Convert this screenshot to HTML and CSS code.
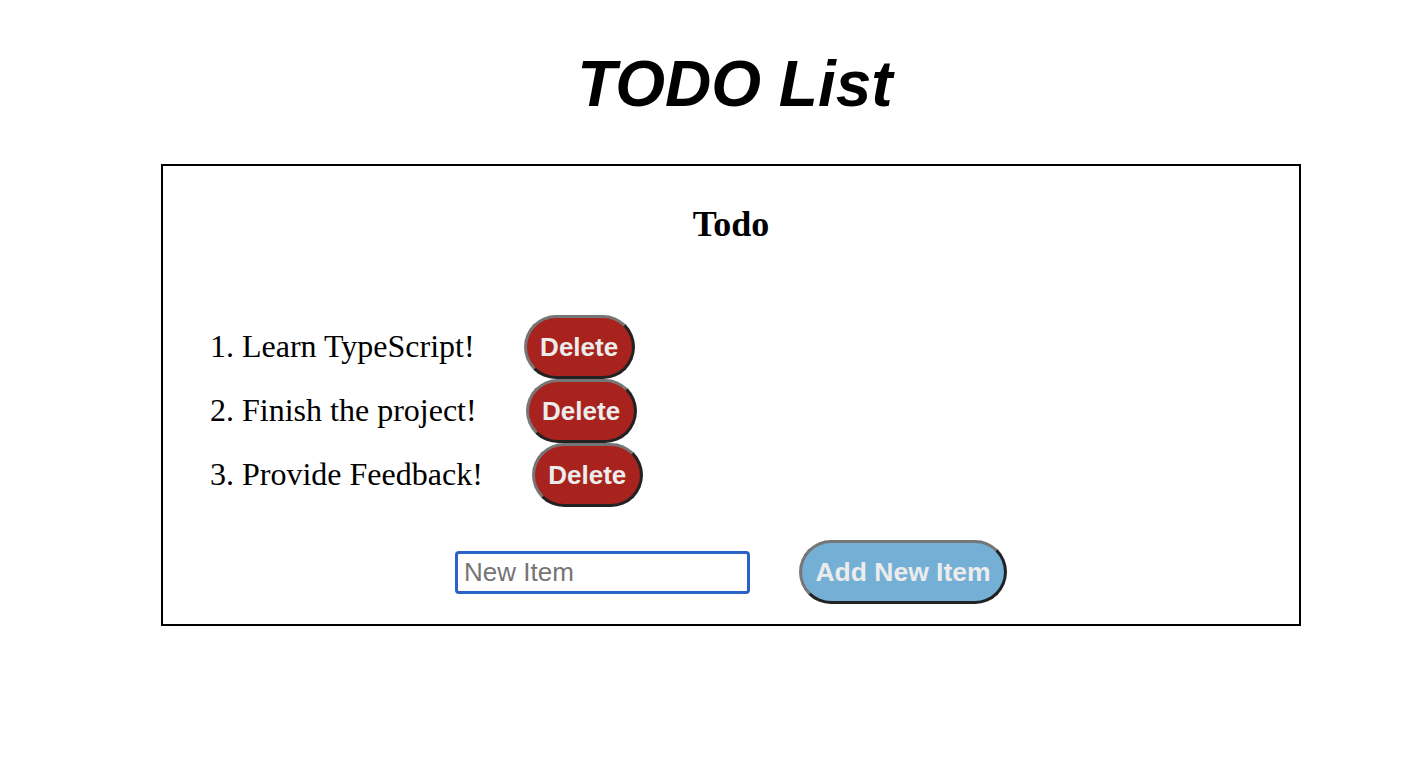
FILE: index.html
```html
<!DOCTYPE html>
<html lang="en">
<head>
<meta charset="utf-8">
<title>TODO List</title>
<link rel="stylesheet" href="styles.css">
</head>
<body>
<div class="page">
  <h1 class="title">TODO List</h1>
  <section class="card">
    <h2 class="card-title">Todo</h2>
    <ol class="todo-list">
      <li class="todo-item"><span class="todo-text">Learn TypeScript!</span><button class="btn btn-delete">Delete</button></li>
      <li class="todo-item"><span class="todo-text">Finish the project!</span><button class="btn btn-delete">Delete</button></li>
      <li class="todo-item"><span class="todo-text">Provide Feedback!</span><button class="btn btn-delete">Delete</button></li>
    </ol>
    <div class="add-row">
      <input class="new-input" type="text" placeholder="New Item">
      <button class="btn btn-add">Add New Item</button>
    </div>
  </section>
</div>
</body>
</html>
```

FILE: styles.css
```css
html, body {
  margin: 0;
  padding: 0;
  background: #fff;
}

.page {
  width: 1140px;
  margin-left: 161px;
  font-family: "Liberation Serif", "Times New Roman", serif;
  color: #000;
}

.title {
  font-family: "Liberation Sans", Arial, sans-serif;
  font-style: italic;
  font-weight: bold;
  font-size: 64px;
  line-height: 74px;
  text-align: center;
  padding-left: 8px;
  margin: 47px 0 43px;
}

.card {
  border: 2px solid #000;
  padding: 0 0 20px;
}

.card-title {
  font-size: 36px;
  font-weight: bold;
  text-align: center;
  line-height: 40px;
  margin: 38px 0 0;
}

.todo-list {
  margin: 71px 0 0;
  padding-left: 79px;
  font-size: 32px;
}

.todo-item {
  height: 64px;
  line-height: 62px;
}

.btn {
  font-family: "Liberation Sans", Arial, sans-serif;
  font-weight: bold;
  color: #ececec;
  border: 3px solid;
  border-color: #767676 #222 #222 #767676;
  border-radius: 32px;
  cursor: pointer;
}

.btn-delete {
  background: #a8231d;
  font-size: 26px;
  height: 64px;
  width: 111px;
  padding: 0;
  margin-left: 49px;
  vertical-align: top;
}

.add-row {
  display: flex;
  justify-content: center;
  align-items: center;
  gap: 49px;
  margin-top: 33px;
}

.new-input {
  box-sizing: border-box;
  width: 295px;
  height: 43px;
  border: 3px solid #2a62c9;
  border-radius: 4px;
  outline: none;
  font-family: "Liberation Sans", Arial, sans-serif;
  font-size: 26px;
  padding: 0 6px;
  color: #000;
}

.new-input::placeholder {
  color: #757575;
}

.btn-add {
  background: #74afd6;
  font-size: 26.5px;
  height: 64px;
  width: 208px;
  padding: 0;
}
```
